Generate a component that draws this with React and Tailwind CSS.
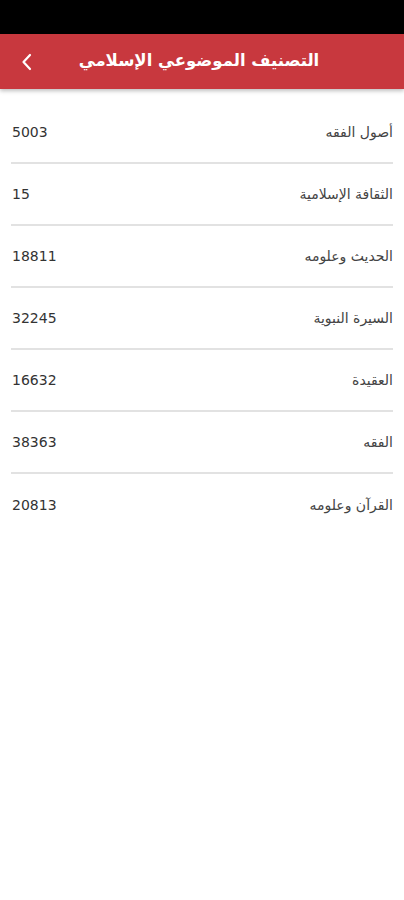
const items = [
  { name: 'أصول الفقه', count: 5003 },
  { name: 'الثقافة الإسلامية', count: 15 },
  { name: 'الحديث وعلومه', count: 18811 },
  { name: 'السيرة النبوية', count: 32245 },
  { name: 'العقيدة', count: 16632 },
  { name: 'الفقه', count: 38363 },
  { name: 'القرآن وعلومه', count: 20813 },
]

function App() {
  return (
    <div className="min-h-[900px] bg-white" style={{ fontFamily: '"DejaVu Sans", "Noto Sans", sans-serif' }}>
      {/* Status bar */}
      <div className="h-[34px] bg-black" />

      {/* Header */}
      <div className="relative h-[55px] bg-[#c8383e] flex items-center shadow-[0_2px_4px_rgba(0,0,0,0.25)]">
        <div className="w-[50px] flex justify-center pl-[4px]">
          <svg width="14" height="20" viewBox="0 0 14 20" fill="none">
            <path d="M10 3 L3.5 10 L10 17" stroke="white" strokeWidth="2.2" strokeLinecap="round" strokeLinejoin="round" />
          </svg>
        </div>
        <h1 className="flex-1 text-center pr-[56px] text-white font-bold text-[16.5px]" dir="rtl">
          التصنيف الموضوعي الإسلامي
        </h1>
      </div>

      {/* List */}
      <div className="pt-[13px] px-[11px]">
        {items.map((item, i) => (
          <div
            key={item.name}
            className={`h-[62px] flex items-center justify-between ${
              i < items.length - 1 ? 'border-b-2 border-[#e2e2e2]' : ''
            }`}
          >
            <span className="text-[14px] text-[#333] pl-[1px]">{item.count}</span>
            <span className="text-[14px] text-[#444]" dir="rtl">{item.name}</span>
          </div>
        ))}
      </div>
    </div>
  )
}

export default App
